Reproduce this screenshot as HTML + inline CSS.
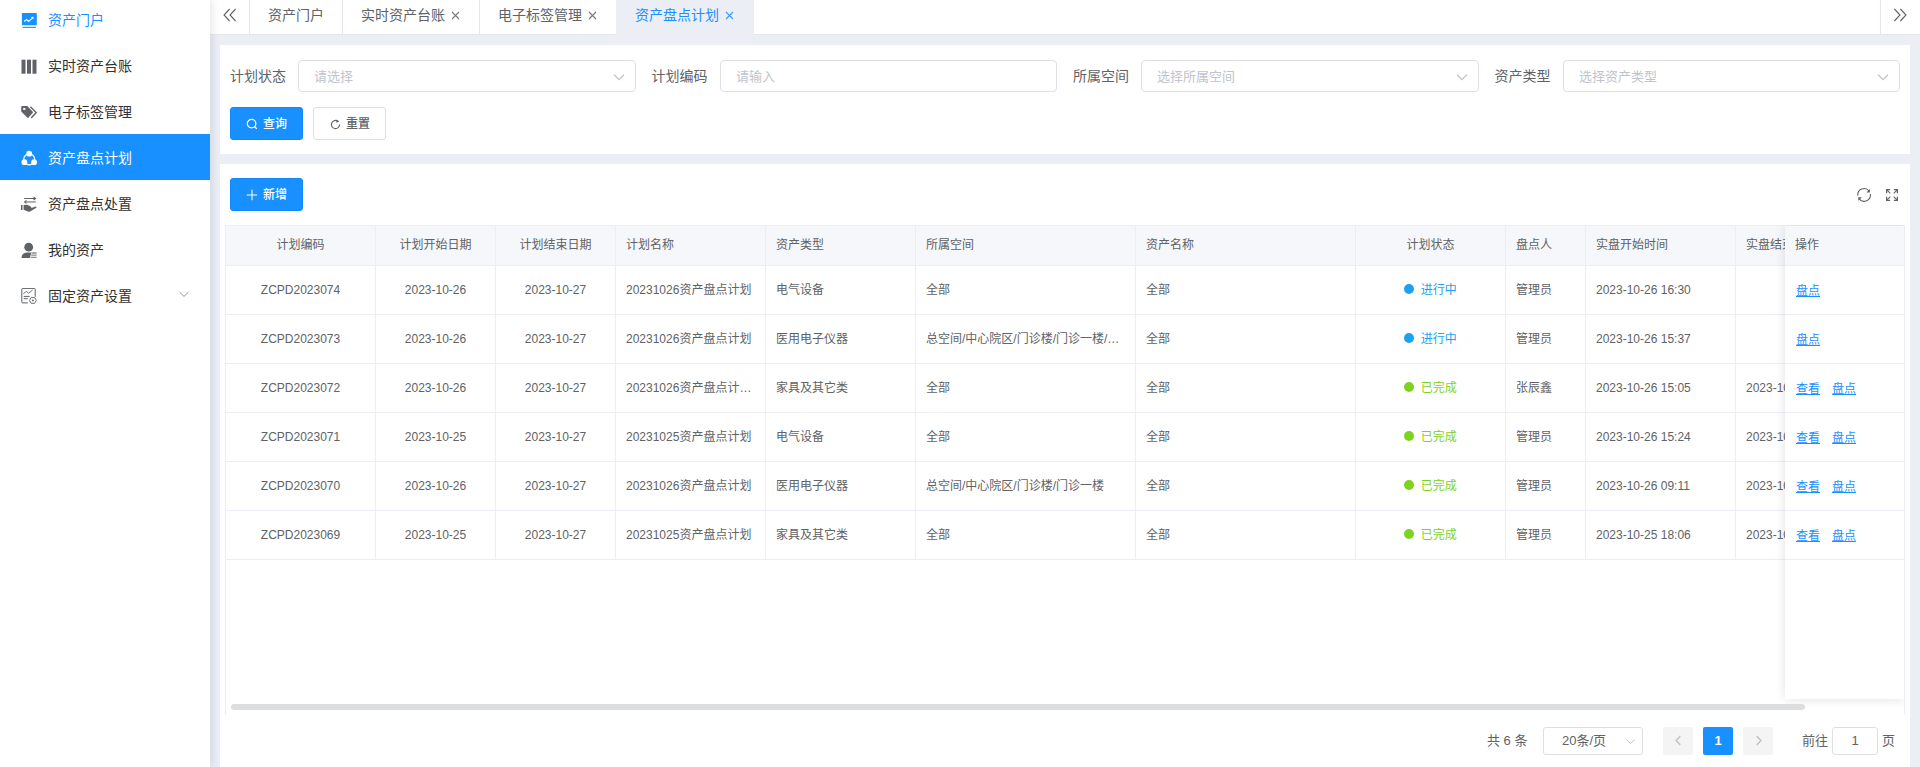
<!DOCTYPE html>
<html lang="zh-CN">
<head>
<meta charset="utf-8">
<title>资产盘点计划</title>
<style>
*{box-sizing:border-box;margin:0;padding:0}
html,body{width:1920px;height:767px;overflow:hidden}
body{position:relative;background:#ebeef5;font-family:"Liberation Sans","Noto Sans CJK SC",sans-serif;font-size:14px;color:#606266;-webkit-font-smoothing:antialiased}
.abs{position:absolute}
/* sidebar */
#side{position:absolute;left:0;top:0;width:210px;height:767px;background:#fff;box-shadow:2px 0 8px rgba(0,21,41,.11);z-index:5}
.mi{position:absolute;left:0;width:210px;height:46px;line-height:46px;font-size:14px;color:#303133;white-space:nowrap}
.mi span{position:absolute;left:48px;top:1px}
.mi svg{position:absolute;left:21px;top:16px;width:16px;height:16px}
.mi.on{background:#1890ff;color:#fff}
.mi.hl{color:#1890ff}
/* tabs */
#tabs{position:absolute;left:210px;top:0;width:1710px;height:34px;background:#fff;box-shadow:0 1px 0 #e3e6ec}
.tab{position:absolute;top:0;height:34px;line-height:30px;font-size:14px;color:#606266;border-right:1px solid #e4e7ed;white-space:nowrap}
.tab span{position:absolute;top:0}
.tab.on{background:#ebeef5;color:#1890ff;border-right:none;height:35px}
.x{position:absolute;top:10.5px;width:9px;height:9px}
/* cards */
.card{position:absolute;background:#fff}
.lbl{position:absolute;font-size:14px;color:#606266;line-height:32px;height:32px;white-space:nowrap}
.inp{position:absolute;height:32px;border:1px solid #dcdfe6;border-radius:4px;background:#fff;font-size:13px;color:#c0c4cc;line-height:31px;padding-left:15px;white-space:nowrap}
.inp svg{position:absolute;right:10.5px;top:10px;width:12px;height:12px}
.btn{position:absolute;height:33px;width:73px;border-radius:3px;font-size:12px;line-height:31px;white-space:nowrap;font-weight:500}
.btn.p{background:#1890ff;border:1px solid #1088ff;color:#fff}
.btn.d{background:#fff;border:1px solid #dcdfe6;color:#606266}
.btn span{position:absolute;top:1px}
.btn svg{position:absolute}
/* table */
#tbl{position:absolute;left:225px;top:225px;width:1680px;height:490px;border-left:1px solid #ebeef5;border-top:1px solid #ebeef5;border-right:1px solid #ebeef5;overflow:hidden;font-size:12px;color:#606266}
.row{position:absolute;left:0;width:1679px;border-bottom:1px solid #ebeef5}
.row.h{top:0;height:40px;background:#f5f7fa}
.c{position:absolute;top:0;height:100%;border-right:1px solid #ebeef5;padding:0 10px;white-space:nowrap;overflow:hidden;text-overflow:ellipsis}
.row.h .c{line-height:39px}
.row.b{height:49px}
.row.b .c{line-height:48px}
.ce{text-align:center}
.dot{display:inline-block;width:10px;height:10px;border-radius:50%;margin-right:6.6px;position:relative;top:-0.5px}
.s1{color:#1ba1f2}.s1 .dot{background:#1ba1f2}
.s2{color:#7ed321}.s2 .dot{background:#7ed321}
#fixclip{position:absolute;left:1700px;top:225px;width:204px;height:490px;overflow:hidden}
#fix{position:absolute;left:85px;top:1px;width:119px;height:473px;background:#fff;box-shadow:0 0 10px rgba(0,0,0,.12);font-size:12px;color:#606266}
#fix .fr{position:absolute;left:0;width:119px;border-bottom:1px solid #ebeef5;padding-left:10px;white-space:nowrap}
#fix a{color:#1890ff;text-decoration:underline;margin-right:12px;position:relative;left:1px}
/* pagination */
.pg{position:absolute;font-size:13px;color:#606266;white-space:nowrap;line-height:28px;height:28px}
.pb{position:absolute;top:727px;width:30px;height:28px;border-radius:2px;background:#f4f4f5}
</style>
</head>
<body>

<!-- ================= SIDEBAR ================= -->
<div id="side">
  <div class="mi hl" style="top:-4px">
    <svg viewBox="0 0 16 16"><rect x="0.9" y="0.9" width="14.9" height="12.3" rx="0.6" fill="#1890ff"/><rect x="1.6" y="14.8" width="13.4" height="1.1" fill="#1890ff"/><path d="M3.2 9.5 L5.6 7.5 L7.6 9.4 L11.4 6.2" fill="none" stroke="#fff" stroke-width="1.1"/><path d="M9.9 5 L12.6 4.7 L12.4 7.5 Z" fill="#fff"/></svg>
    <span>资产门户</span>
  </div>
  <div class="mi" style="top:42px">
    <svg viewBox="0 0 16 16"><rect x="0.5" y="1.7" width="4" height="14" fill="#5f6266"/><rect x="6" y="1.7" width="4" height="14" fill="#5f6266"/><rect x="11.5" y="1.7" width="4" height="14" fill="#5f6266"/></svg>
    <span>实时资产台账</span>
  </div>
  <div class="mi" style="top:88px">
    <svg viewBox="0 0 16 16"><path d="M0.2 3.2 Q0.2 1.9 1.5 1.9 L6.3 1.9 L12.2 8.2 L7.6 13.6 Q6.9 14.3 6.2 13.6 L0.2 7.6 Z" fill="#5f6266"/><rect x="2.2" y="4" width="2.2" height="1.9" fill="#fff"/><path d="M9.4 2.8 L15.2 8.6 L10.2 14" fill="none" stroke="#5f6266" stroke-width="1.4"/></svg>
    <span>电子标签管理</span>
  </div>
  <div class="mi on" style="top:134px">
    <svg viewBox="0 0 16 16"><circle cx="8.2" cy="9.4" r="5.5" fill="none" stroke="#fff" stroke-width="1.2"/><circle cx="8.2" cy="3.7" r="2.9" fill="#fff"/><circle cx="3.4" cy="12.2" r="2.9" fill="#fff"/><circle cx="13.1" cy="12.2" r="2.9" fill="#fff"/></svg>
    <span>资产盘点计划</span>
  </div>
  <div class="mi" style="top:180px">
    <svg viewBox="0 0 16 16"><path d="M3.2 2.5 H14.4 M12.6 1 L14.6 2.5 L12.6 4" fill="none" stroke="#5f6266" stroke-width="1.1"/><path d="M4.2 5.9 H14.8" fill="none" stroke="#9a9c9f" stroke-width="1.6"/><path d="M5.4 4.4 L3.6 5.9 L5.4 7.4" fill="none" stroke="#5f6266" stroke-width="1.1"/><rect x="0" y="9" width="1.5" height="5" fill="#5f6266"/><path d="M2.6 9 L6.2 8.8 L9.8 10.6 L10.6 12 L14.4 10.6 Q16 10.8 15.4 11.8 L9 15.6 Q8 16 7 15.6 L2.6 13.8 Z" fill="#5f6266"/></svg>
    <span>资产盘点处置</span>
  </div>
  <div class="mi" style="top:226px">
    <svg viewBox="0 0 16 16"><circle cx="7.7" cy="5.2" r="4.4" fill="#5f6266"/><path d="M0.5 16 Q0.7 10.6 6.4 10.4 L10.4 10.4 L8.8 16 Z" fill="#5f6266"/><path d="M10.6 11 H15.6 M10.2 13.2 H15.6 M9.8 15.4 H15.6" stroke="#8b8d91" stroke-width="1.3" fill="none"/></svg>
    <span>我的资产</span>
  </div>
  <div class="mi" style="top:272px">
    <svg viewBox="0 0 16 16"><path d="M6.9 14.9 H1.6 Q0.8 14.9 0.8 14.1 V1.2 Q0.8 0.4 1.6 0.4 H13.4 Q14.2 0.4 14.2 1.2 V8.8" fill="none" stroke="#5f6266" stroke-width="1"/><path d="M2.3 5.7 L5.6 3.3 L7.6 5.3 L11.6 2" fill="none" stroke="#5f6266" stroke-width="0.9"/><path d="M2.7 8.4 H8.7 M2.7 10.7 H6.7" stroke="#5f6266" stroke-width="1" fill="none"/><path d="M15.30 12.40 L13.60 15.34 L10.20 15.34 L8.50 12.40 L10.20 9.46 L13.60 9.46 Z" fill="none" stroke="#5f6266" stroke-width="0.9"/><circle cx="11.9" cy="12.4" r="0.9" fill="#5f6266"/></svg>
    <span>固定资产设置</span>
    <svg viewBox="0 0 12 12" style="left:178px;top:16px;width:12px;height:12px"><path d="M1.5 4 L6 8.4 L10.5 4" fill="none" stroke="#909399" stroke-width="1"/></svg>
  </div>
</div>

<!-- ================= TABS ================= -->
<div id="tabs">
  <div class="tab" style="left:0;width:40px">
    <svg class="abs" style="left:13px;top:8px;width:14px;height:14px" viewBox="0 0 14 14"><path d="M6.6 1 L1 7 L6.6 13 M12.6 1 L7 7 L12.6 13" fill="none" stroke="#606266" stroke-width="1.1"/></svg>
  </div>
  <div class="tab" style="left:40px;width:93px"><span style="left:18px">资产门户</span></div>
  <div class="tab" style="left:133px;width:137px"><span style="left:18px">实时资产台账</span>
    <svg class="x" style="left:108px" viewBox="0 0 9 9"><path d="M1 1 L8 8 M8 1 L1 8" stroke="#74777d" stroke-width="1.1" fill="none"/></svg></div>
  <div class="tab" style="left:270px;width:137px"><span style="left:18px">电子标签管理</span>
    <svg class="x" style="left:108px" viewBox="0 0 9 9"><path d="M1 1 L8 8 M8 1 L1 8" stroke="#74777d" stroke-width="1.1" fill="none"/></svg></div>
  <div class="tab on" style="left:406px;width:138px"><span style="left:19px">资产盘点计划</span>
    <svg class="x" style="left:109px" viewBox="0 0 9 9"><path d="M1 1 L8 8 M8 1 L1 8" stroke="#3a9dff" stroke-width="1.1" fill="none"/></svg></div>
  <div class="abs" style="left:1670px;top:0;width:1px;height:34px;background:#e4e7ed"></div>
  <svg class="abs" style="left:1683px;top:8px;width:14px;height:14px" viewBox="0 0 14 14"><path d="M1.4 1 L7 7 L1.4 13 M7.4 1 L13 7 L7.4 13" fill="none" stroke="#606266" stroke-width="1.1"/></svg>
</div>

<!-- ================= FILTER CARD ================= -->
<div class="card" style="left:220px;top:45px;width:1690px;height:109px"></div>
<div class="lbl" style="left:230px;top:60px">计划状态</div>
<div class="inp" style="left:298px;top:60px;width:338px">请选择<svg viewBox="0 0 12 12"><path d="M1 3.6 L6 8.6 L11 3.6" fill="none" stroke="#bcc0c8" stroke-width="1.25"/></svg></div>
<div class="lbl" style="left:651.5px;top:60px">计划编码</div>
<div class="inp" style="left:720px;top:60px;width:337px">请输入</div>
<div class="lbl" style="left:1073px;top:60px">所属空间</div>
<div class="inp" style="left:1141px;top:60px;width:338px">选择所属空间<svg viewBox="0 0 12 12"><path d="M1 3.6 L6 8.6 L11 3.6" fill="none" stroke="#bcc0c8" stroke-width="1.25"/></svg></div>
<div class="lbl" style="left:1494.5px;top:60px">资产类型</div>
<div class="inp" style="left:1563px;top:60px;width:337px">选择资产类型<svg viewBox="0 0 12 12"><path d="M1 3.6 L6 8.6 L11 3.6" fill="none" stroke="#bcc0c8" stroke-width="1.25"/></svg></div>

<div class="btn p" style="left:230px;top:107px">
  <svg style="left:15px;top:10px;width:12px;height:12px" viewBox="0 0 12 12"><circle cx="5.6" cy="5.6" r="4.3" fill="none" stroke="#fff" stroke-width="1.2"/><path d="M8.6 8.8 L10.8 10.8" stroke="#fff" stroke-width="1.2" fill="none"/></svg>
  <span style="left:32px">查询</span>
</div>
<div class="btn d" style="left:313px;top:107px">
  <svg style="left:16px;top:11px;width:11px;height:11px" viewBox="0 0 11 11"><path d="M9.6 5.5 A4.1 4.1 0 1 1 7.6 2" fill="none" stroke="#606266" stroke-width="1.1"/><path d="M6.6 0.4 L9.2 2.4 L6.4 3.8 Z" fill="#606266"/></svg>
  <span style="left:32px">重置</span>
</div>

<!-- ================= TABLE CARD ================= -->
<div class="card" style="left:220px;top:164px;width:1690px;height:603px"></div>
<div class="btn p" style="left:230px;top:178px">
  <svg style="left:15px;top:10px;width:12px;height:12px" viewBox="0 0 12 12"><path d="M6 0.8 V11.2 M0.8 6 H11.2" stroke="#fff" stroke-width="1.1" fill="none"/></svg>
  <span style="left:32px">新增</span>
</div>
<svg class="abs" style="left:1856px;top:187px;width:16px;height:16px" viewBox="0 0 16 16"><path d="M1.85 8.67 A6.3 6.3 0 0 1 13.06 4.02 M14.35 7.13 A6.3 6.3 0 0 1 3.14 11.78" fill="none" stroke="#606266" stroke-width="1.15"/><path d="M13.9 2.1 V5.5 H10.4 Z M2.3 13.7 V10.2 H5.8 Z" fill="#606266"/></svg>
<svg class="abs" style="left:1886px;top:189px;width:12px;height:12px" viewBox="0 0 12 12"><path d="M0.6 4.2 V0.6 H4.2 M7.8 0.6 H11.4 V4.2 M11.4 7.8 V11.4 H7.8 M4.2 11.4 H0.6 V7.8" fill="none" stroke="#606266" stroke-width="1.3"/><path d="M0.8 0.8 L4.3 4.3 M11.2 0.8 L7.7 4.3 M11.2 11.2 L7.7 7.7 M0.8 11.2 L4.3 7.7" fill="none" stroke="#606266" stroke-width="1.1"/></svg>

<div id="tbl">
  <div class="row h">
    <div class="c ce" style="left:0;width:150px">计划编码</div>
    <div class="c ce" style="left:150px;width:120px">计划开始日期</div>
    <div class="c ce" style="left:270px;width:120px">计划结束日期</div>
    <div class="c" style="left:390px;width:150px">计划名称</div>
    <div class="c" style="left:540px;width:150px">资产类型</div>
    <div class="c" style="left:690px;width:220px">所属空间</div>
    <div class="c" style="left:910px;width:220px">资产名称</div>
    <div class="c ce" style="left:1130px;width:150px">计划状态</div>
    <div class="c" style="left:1280px;width:80px">盘点人</div>
    <div class="c" style="left:1360px;width:150px">实盘开始时间</div>
    <div class="c" style="left:1510px;width:180px;text-overflow:clip">实盘结束时间</div>
  </div>

  <div class="row b" style="top:40px">
    <div class="c ce" style="left:0;width:150px">ZCPD2023074</div>
    <div class="c ce" style="left:150px;width:120px">2023-10-26</div>
    <div class="c ce" style="left:270px;width:120px">2023-10-27</div>
    <div class="c" style="left:390px;width:150px">20231026资产盘点计划</div>
    <div class="c" style="left:540px;width:150px">电气设备</div>
    <div class="c" style="left:690px;width:220px">全部</div>
    <div class="c" style="left:910px;width:220px">全部</div>
    <div class="c ce s1" style="left:1130px;width:150px"><i class="dot"></i>进行中</div>
    <div class="c" style="left:1280px;width:80px">管理员</div>
    <div class="c" style="left:1360px;width:150px">2023-10-26 16:30</div>
    <div class="c" style="left:1510px;width:180px;text-overflow:clip"></div>
  </div>
  <div class="row b" style="top:89px">
    <div class="c ce" style="left:0;width:150px">ZCPD2023073</div>
    <div class="c ce" style="left:150px;width:120px">2023-10-26</div>
    <div class="c ce" style="left:270px;width:120px">2023-10-27</div>
    <div class="c" style="left:390px;width:150px">20231026资产盘点计划</div>
    <div class="c" style="left:540px;width:150px">医用电子仪器</div>
    <div class="c" style="left:690px;width:220px">总空间/中心院区/门诊楼/门诊一楼/门诊大厅</div>
    <div class="c" style="left:910px;width:220px">全部</div>
    <div class="c ce s1" style="left:1130px;width:150px"><i class="dot"></i>进行中</div>
    <div class="c" style="left:1280px;width:80px">管理员</div>
    <div class="c" style="left:1360px;width:150px">2023-10-26 15:37</div>
    <div class="c" style="left:1510px;width:180px;text-overflow:clip"></div>
  </div>
  <div class="row b" style="top:138px">
    <div class="c ce" style="left:0;width:150px">ZCPD2023072</div>
    <div class="c ce" style="left:150px;width:120px">2023-10-26</div>
    <div class="c ce" style="left:270px;width:120px">2023-10-27</div>
    <div class="c" style="left:390px;width:150px">20231026资产盘点计划2</div>
    <div class="c" style="left:540px;width:150px">家具及其它类</div>
    <div class="c" style="left:690px;width:220px">全部</div>
    <div class="c" style="left:910px;width:220px">全部</div>
    <div class="c ce s2" style="left:1130px;width:150px"><i class="dot"></i>已完成</div>
    <div class="c" style="left:1280px;width:80px">张辰鑫</div>
    <div class="c" style="left:1360px;width:150px">2023-10-26 15:05</div>
    <div class="c" style="left:1510px;width:180px;text-overflow:clip">2023-10-26 15:20</div>
  </div>
  <div class="row b" style="top:187px">
    <div class="c ce" style="left:0;width:150px">ZCPD2023071</div>
    <div class="c ce" style="left:150px;width:120px">2023-10-25</div>
    <div class="c ce" style="left:270px;width:120px">2023-10-27</div>
    <div class="c" style="left:390px;width:150px">20231025资产盘点计划</div>
    <div class="c" style="left:540px;width:150px">电气设备</div>
    <div class="c" style="left:690px;width:220px">全部</div>
    <div class="c" style="left:910px;width:220px">全部</div>
    <div class="c ce s2" style="left:1130px;width:150px"><i class="dot"></i>已完成</div>
    <div class="c" style="left:1280px;width:80px">管理员</div>
    <div class="c" style="left:1360px;width:150px">2023-10-26 15:24</div>
    <div class="c" style="left:1510px;width:180px;text-overflow:clip">2023-10-26 15:30</div>
  </div>
  <div class="row b" style="top:236px">
    <div class="c ce" style="left:0;width:150px">ZCPD2023070</div>
    <div class="c ce" style="left:150px;width:120px">2023-10-26</div>
    <div class="c ce" style="left:270px;width:120px">2023-10-27</div>
    <div class="c" style="left:390px;width:150px">20231026资产盘点计划</div>
    <div class="c" style="left:540px;width:150px">医用电子仪器</div>
    <div class="c" style="left:690px;width:220px">总空间/中心院区/门诊楼/门诊一楼</div>
    <div class="c" style="left:910px;width:220px">全部</div>
    <div class="c ce s2" style="left:1130px;width:150px"><i class="dot"></i>已完成</div>
    <div class="c" style="left:1280px;width:80px">管理员</div>
    <div class="c" style="left:1360px;width:150px">2023-10-26 09:11</div>
    <div class="c" style="left:1510px;width:180px;text-overflow:clip">2023-10-26 09:30</div>
  </div>
  <div class="row b" style="top:285px">
    <div class="c ce" style="left:0;width:150px">ZCPD2023069</div>
    <div class="c ce" style="left:150px;width:120px">2023-10-25</div>
    <div class="c ce" style="left:270px;width:120px">2023-10-27</div>
    <div class="c" style="left:390px;width:150px">20231025资产盘点计划</div>
    <div class="c" style="left:540px;width:150px">家具及其它类</div>
    <div class="c" style="left:690px;width:220px">全部</div>
    <div class="c" style="left:910px;width:220px">全部</div>
    <div class="c ce s2" style="left:1130px;width:150px"><i class="dot"></i>已完成</div>
    <div class="c" style="left:1280px;width:80px">管理员</div>
    <div class="c" style="left:1360px;width:150px">2023-10-25 18:06</div>
    <div class="c" style="left:1510px;width:180px;text-overflow:clip">2023-10-25 18:20</div>
  </div>
</div>

<!-- fixed right column -->
<div id="fixclip"><div id="fix">
  <div class="fr" style="top:0;height:40px;line-height:38px;background:#f5f7fa">操作</div>
  <div class="fr" style="top:40px;height:49px;line-height:50px"><a>盘点</a></div>
  <div class="fr" style="top:89px;height:49px;line-height:50px"><a>盘点</a></div>
  <div class="fr" style="top:138px;height:49px;line-height:50px"><a>查看</a><a>盘点</a></div>
  <div class="fr" style="top:187px;height:49px;line-height:50px"><a>查看</a><a>盘点</a></div>
  <div class="fr" style="top:236px;height:49px;line-height:50px"><a>查看</a><a>盘点</a></div>
  <div class="fr" style="top:285px;height:49px;line-height:50px"><a>查看</a><a>盘点</a></div>
</div></div>

<!-- horizontal scrollbar -->
<div class="abs" style="left:231px;top:704px;width:1574px;height:6px;border-radius:3px;background:#dddee0"></div>

<!-- ================= PAGINATION ================= -->
<div class="pg" style="left:1487px;top:727px">共 6 条</div>
<div class="abs" style="left:1543px;top:727px;width:100px;height:28px;border:1px solid #dcdfe6;border-radius:3px;background:#fff"></div>
<div class="pg" style="left:1562px;top:727px">20条/页</div>
<svg class="abs" style="left:1625px;top:736px;width:11px;height:11px" viewBox="0 0 11 11"><path d="M1.4 3.6 L5.5 7.6 L9.6 3.6" fill="none" stroke="#c0c4cc" stroke-width="1"/></svg>
<div class="pb" style="left:1663px"><svg class="abs" style="left:9.5px;top:8px;width:11px;height:11px" viewBox="0 0 10 10"><path d="M6.6 1 L2.8 5 L6.6 9" fill="none" stroke="#c0c4cc" stroke-width="1.4"/></svg></div>
<div class="pb" style="left:1703px;background:#1890ff;color:#fff;font-size:13px;font-weight:bold;text-align:center;line-height:28px">1</div>
<div class="pb" style="left:1743px"><svg class="abs" style="left:9.5px;top:8px;width:11px;height:11px" viewBox="0 0 10 10"><path d="M3.4 1 L7.2 5 L3.4 9" fill="none" stroke="#c0c4cc" stroke-width="1.4"/></svg></div>
<div class="pg" style="left:1802px;top:727px">前往</div>
<div class="abs" style="left:1832px;top:727px;width:46px;height:28px;border:1px solid #dcdfe6;border-radius:3px;background:#fff;font-size:13px;color:#606266;text-align:center;line-height:26px">1</div>
<div class="pg" style="left:1882px;top:727px">页</div>

</body>
</html>
